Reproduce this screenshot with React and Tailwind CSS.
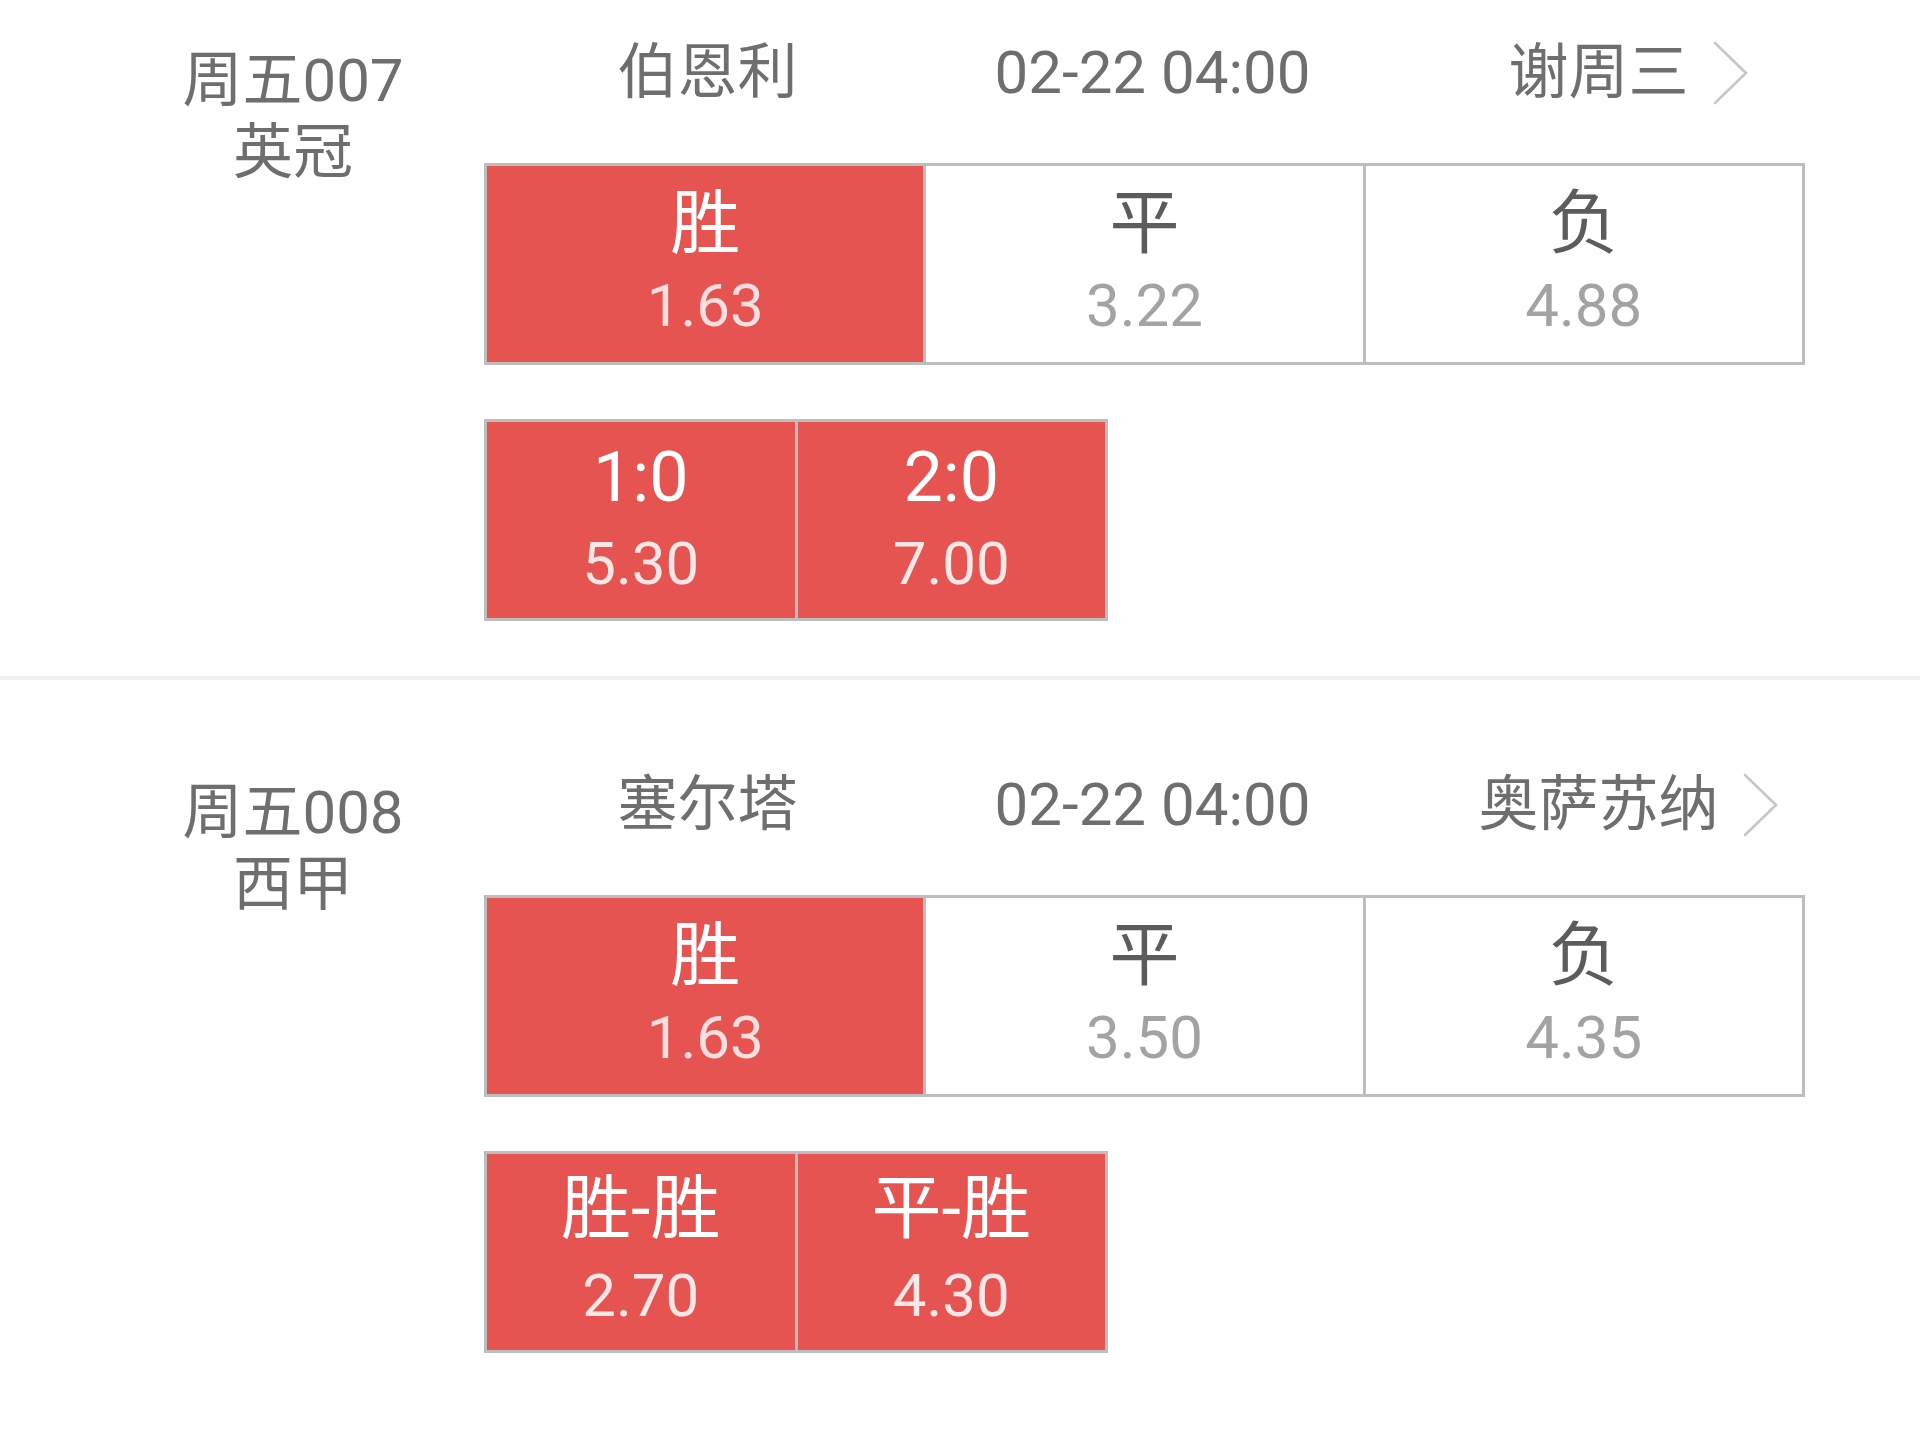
import React from "react";

const matches = [
  {
    no: "周五007",
    league: "英冠",
    home: "伯恩利",
    time: "02-22 04:00",
    away: "谢周三",
    odds: [
      { label: "胜", value: "1.63", on: true },
      { label: "平", value: "3.22", on: false },
      { label: "负", value: "4.88", on: false },
    ],
    extra: [
      { label: "1:0", value: "5.30" },
      { label: "2:0", value: "7.00" },
    ],
  },
  {
    no: "周五008",
    league: "西甲",
    home: "塞尔塔",
    time: "02-22 04:00",
    away: "奥萨苏纳",
    odds: [
      { label: "胜", value: "1.63", on: true },
      { label: "平", value: "3.50", on: false },
      { label: "负", value: "4.35", on: false },
    ],
    extra: [
      { label: "胜-胜", value: "2.70" },
      { label: "平-胜", value: "4.30" },
    ],
  },
];

function Chevron() {
  return (
    <svg width="35" height="64" viewBox="0 0 35 64" fill="none">
      <polyline
        points="2,2 33,32 2,62"
        stroke="#c6c6c6"
        strokeWidth="2.6"
        strokeLinejoin="miter"
        strokeLinecap="round"
      />
    </svg>
  );
}

function OddCell({ label, value, on }) {
  return (
    <div
      className={
        on
          ? "flex flex-col items-center justify-center bg-[#e55451]"
          : "flex flex-col items-center justify-center bg-white"
      }
    >
      <div
        className={
          on
            ? "text-[70px] leading-[84px] text-white"
            : "text-[70px] leading-[84px] text-[#5c5c5c]"
        }
      >
        {label}
      </div>
      <div
        className={
          on
            ? "text-[60px] leading-[80px] text-[#fcdede]"
            : "text-[60px] leading-[80px] text-[#a3a3a3]"
        }
      >
        {value}
      </div>
    </div>
  );
}

function ExtraCell({ label, value }) {
  return (
    <div className="flex flex-col items-center justify-center bg-[#e55451]">
      <div className="text-[70px] leading-[88px] text-white">{label}</div>
      <div className="text-[60px] leading-[86px] text-[#fde6e6]">{value}</div>
    </div>
  );
}

function Match({ m, last }) {
  return (
    <div className="flex flex-col">
      <div className="flex pt-[89px] pb-[55px]">
        <div className="w-[484px] pl-[102px] pt-[8px] flex flex-col items-center text-[60px] leading-[72px] text-[#6e6e6e]">
          <span>{m.no}</span>
          <span>{m.league}</span>
        </div>
        <div className="flex flex-col">
          <div className="flex h-[72px] items-center text-[60px] leading-[72px] text-[#6e6e6e]">
            <div className="w-[441px] text-center pl-[6px]">{m.home}</div>
            <div className="w-[441px] text-center pl-[14px]">{m.time}</div>
            <div className="w-[524px] flex items-center justify-center gap-[24px]">
              <span>{m.away}</span>
              <Chevron />
            </div>
          </div>
          <div className="mt-[54px] grid grid-cols-3 gap-[3px] p-[3px] bg-[#bdbdbd] w-[1321px] h-[202px]">
            {m.odds.map((o, i) => (
              <OddCell key={i} {...o} />
            ))}
          </div>
          <div className="mt-[54px] grid grid-cols-2 gap-[3px] p-[3px] bg-[#bdbdbd] w-[624px] h-[202px]">
            {m.extra.map((o, i) => (
              <ExtraCell key={i} {...o} />
            ))}
          </div>
        </div>
      </div>
      {!last && <div className="h-[4px] bg-[#f2f2f2]" />}
    </div>
  );
}

export default function App() {
  return (
    <div className="w-[1920px] h-[1440px] overflow-hidden bg-white font-[Roboto,'Noto_Sans_CJK_SC',sans-serif]">
      <div className="-mt-[52px]">
        {matches.map((m, i) => (
          <Match key={i} m={m} last={i === matches.length - 1} />
        ))}
      </div>
    </div>
  );
}
